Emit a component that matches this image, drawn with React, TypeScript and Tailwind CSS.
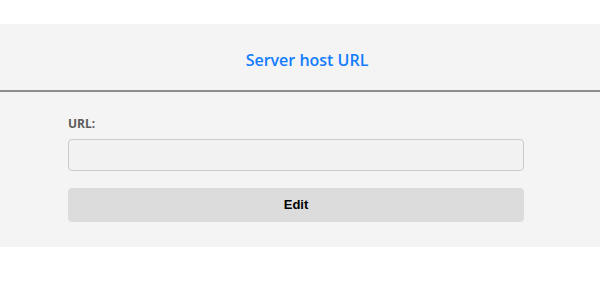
const App = () => {
  return (
    <div className="min-h-[281px] bg-white pt-6 font-['Open_Sans',sans-serif]">
      <div className="bg-[#f4f4f4] pb-px">
        <div className="flex h-[68px] items-center justify-center border-b-2 border-[#8e8e8e] pt-[6px] pl-[14px]">
          <h1 className="text-[16px] font-semibold text-[#127cff]">
            Server host URL
          </h1>
        </div>
        <div className="px-[68px] pt-[24px] pb-6 pr-[76px]">
          <label className="block text-[12px] leading-4 font-bold text-[#5a5a5a]">
            URL:
          </label>
          <input
            type="text"
            className="mt-[7px] block h-8 w-full rounded border border-[#cccccc] bg-[#f2f2f2] px-2 text-sm outline-none"
          />
          <button className="mt-[17px] h-[34px] w-full rounded bg-[#dcdcdc] font-['Liberation_Sans',sans-serif] text-[13px] font-bold text-black">
            Edit
          </button>
        </div>
      </div>
    </div>
  );
};

export default App;
